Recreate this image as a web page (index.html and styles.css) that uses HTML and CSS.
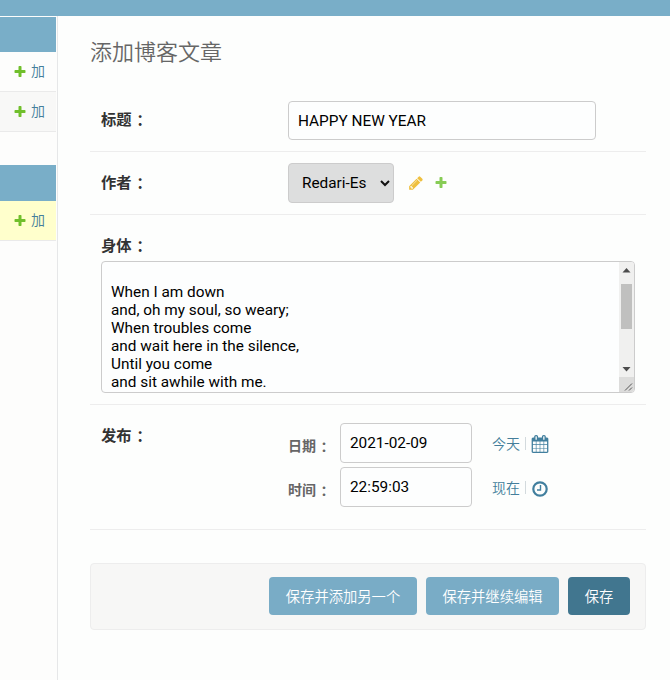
FILE: index.html
```
<!DOCTYPE html>
<html lang="zh">
<head>
<meta charset="utf-8">
<title>添加博客文章</title>
<link rel="stylesheet" href="styles.css">
</head>
<body>
<svg width="0" height="0" class="defs">
  <symbol id="plus" viewBox="0 0 1792 1792"><path d="M1600 736v192q0 40-28 68t-68 28h-416v416q0 40-28 68t-68 28h-192q-40 0-68-28t-28-68v-416h-416q-40 0-68-28t-28-68v-192q0-40 28-68t68-28h416v-416q0-40 28-68t68-28h192q40 0 68 28t28 68v416h416q40 0 68 28t28 68z"/></symbol>
</svg>
<header class="topbar"></header>
<div class="layout">
  <nav class="sidebar">
    <section class="module">
      <div class="caption"></div>
      <a class="row"><svg class="plus"><use href="#plus"/></svg>加</a>
      <a class="row alt"><svg class="plus"><use href="#plus"/></svg>加</a>
    </section>
    <section class="module">
      <div class="caption tall"></div>
      <a class="row current"><svg class="plus"><use href="#plus"/></svg>加</a>
    </section>
  </nav>
  <main class="content">
    <h1>添加博客文章</h1>
    <form>
      <div class="field title-field">
        <label>标题<span lang="zh-TW">：</span></label>
        <input class="title-input" type="text" value="HAPPY NEW YEAR">
      </div>
      <div class="field author-field">
        <label>作者<span lang="zh-TW">：</span></label>
        <div class="select">Redari-Es
          <svg width="10" height="7" viewBox="0 0 10 7"><path d="M1 1l4 4 4-4" fill="none" stroke="#111" stroke-width="2"/></svg>
        </div>
        <svg class="pencil" viewBox="0 0 1792 1792"><path d="M491 1536l91-91-235-235-91 91v107h128v128h107zm523-928q0-22-22-22-10 0-17 7l-542 542q-7 7-7 17 0 22 22 22 10 0 17-7l542-542q7-7 7-17zm-54-192l416 416-832 832h-416v-416zm683 96q0 53-37 90l-166 166-416-416 166-165q36-38 90-38 53 0 91 38l235 234q37 39 37 91z"/></svg>
        <svg class="plus add"><use href="#plus"/></svg>
      </div>
      <div class="field body-field">
        <label>身体<span lang="zh-TW">：</span></label>
        <div class="textarea">
          <div class="text">When I am down
and, oh my soul, so weary;
When troubles come
and wait here in the silence,
Until you come
and sit awhile with me.</div>
          <div class="scrollbar">
            <svg class="arrow" viewBox="0 0 15 16"><path d="M3.500 10.500h8l-4-4.500z"/></svg>
            <div class="track"><div class="thumb"></div></div>
            <svg class="arrow" viewBox="0 0 15 16"><path d="M3.500 6h8l-4 4.500z"/></svg>
            <svg class="grip" viewBox="0 0 15 15"><path d="M6 13.500l7-7M10 13.500l3-3" fill="none" stroke="#555"/></svg>
          </div>
        </div>
      </div>
      <div class="field publish-field">
        <label>发布<span lang="zh-TW">：</span></label>
        <div class="datetime">
          <div class="line"><span class="sub">日期<span lang="zh-TW">：</span></span><input type="text" value="2021-02-09"><a>今天</a><i></i>
            <svg class="icon calendar" viewBox="0 -128 1664 1792"><path d="M128 1536h288v-288h-288v288zm352 0h320v-288h-320v288zm-352-352h288v-320h-288v320zm352 0h320v-320h-320v320zm-352-384h288v-288h-288v288zm736 736h320v-288h-320v288zm-384-736h320v-288h-320v288zm768 736h288v-288h-288v288zm-384-352h320v-320h-320v320zm-352-864v-288q0-13-9.500-22.500t-22.500-9.500h-64q-13 0-22.500 9.500t-9.500 22.500v288q0 13 9.500 22.500t22.500 9.500h64q13 0 22.500-9.500t9.500-22.500zm736 864h288v-320h-288v320zm-384-384h320v-288h-320v288zm384 0h288v-288h-288v288zm32-480v-288q0-13-9.500-22.500t-22.500-9.500h-64q-13 0-22.500 9.500t-9.500 22.500v288q0 13 9.500 22.500t22.500 9.500h64q13 0 22.500-9.500t9.500-22.500zm384-64v1280q0 52-38 90t-90 38h-1408q-52 0-90-38t-38-90v-1280q0-52 38-90t90-38h128v-96q0-66 47-113t113-47h64q66 0 113 47t47 113v96h384v-96q0-66 47-113t113-47h64q66 0 113 47t47 113v96h128q52 0 90 38t38 90z"/></svg>
          </div>
          <div class="line"><span class="sub">时间<span lang="zh-TW">：</span></span><input type="text" value="22:59:03"><a>现在</a><i></i>
            <svg class="icon" viewBox="0 0 18 18"><circle cx="9" cy="9" r="6.700" fill="none" stroke="#417f9e" stroke-width="2.200"/><path d="M9.500 5v5H6" fill="none" stroke="#417f9e" stroke-width="1.400"/></svg>
          </div>
        </div>
      </div>
      <div class="submit-row">
        <button type="button">保存并添加另一个</button>
        <button type="button">保存并继续编辑</button>
        <button type="button" class="primary">保存</button>
      </div>
    </form>
  </main>
</div>
</body>
</html>
```
FILE: styles.css
```
* { box-sizing: border-box; }
body {
  margin: 0;
  height: 680px;
  overflow: hidden;
  background: #fdfefd;
  color: #333;
  font: 14px/18px Roboto, "Noto Sans CJK SC", sans-serif;
}
[lang="zh-TW"] { font-family: "Noto Sans CJK TC", sans-serif; line-height: 1; margin-left: 1px; vertical-align: -1px; }
.defs { position: absolute; }
.topbar { height: 16px; background: #79aec8; }
.layout { display: flex; height: 664px; }
.sidebar { width: 58px; padding: 1px 1px 0 0; border-right: 1px solid #e6e7e8; background: #fdfdfc; }
.module { margin-bottom: 33px; }
.caption { height: 35px; background: #79aec8; }
.caption.tall { height: 36px; }
.row {
  display: flex;
  align-items: center;
  height: 40px;
  padding: 0 0 1px 13px;
  gap: 4px;
  border-bottom: 1px solid #eaeaea;
  color: #447e9b;
  font-weight: 350;
}
.row.alt { background: #f8f8f7; }
.row.current { background: #ffffcc; }
.plus { width: 14px; height: 14px; fill: #70bf2b; }
.row .plus { margin-top: 1px; }
.content { flex: 1; padding: 22px 24px 0 32px; }
h1 { margin: 0 0 36px; font-size: 22px; line-height: 30px; font-weight: 350; color: #666; }
.field { display: flex; padding-left: 11px; border-bottom: 1px solid #ededed; }
label { width: 187px; font-size: 15.3px; font-weight: 700; flex: none; }
input {
  height: 40px;
  padding: 0 9px;
  border: 1px solid #ccc;
  border-radius: 4px;
  background: #fdfefe;
  color: #000;
  font: 15.35px Roboto, sans-serif;
}
.title-field { height: 48px; }
.title-field label { padding-top: 7px; }
.title-input { width: 308px; height: 39px; margin-top: -3px; }
.author-field { height: 63px; align-items: center; }
.select {
  display: flex;
  align-items: center;
  justify-content: space-between;
  width: 106px;
  height: 40px;
  padding: 0 3px 0 13px;
  border: 1px solid #ccc;
  border-radius: 4px;
  background: #dddede;
  color: #000;
  font-size: 15.35px;
}
.pencil { width: 16px; height: 16px; margin-left: 14px; fill: #efc03f; }
.plus.add { margin-left: 10px; fill: #87cc55; }
.body-field { display: block; height: 190px; padding-top: 22px; }
.body-field label { display: block; height: 24px; }
.textarea {
  display: flex;
  width: 534px;
  height: 132px;
  border: 1px solid #ccc;
  border-radius: 4px;
  overflow: hidden;
  background: #fdfefe;
}
.text { flex: 1; padding: 21px 9px 0; white-space: pre; font-size: 15.35px; color: #000; }
.scrollbar { display: flex; flex-direction: column; width: 15px; background: #f0f0ef; }
.arrow { width: 15px; height: 16px; fill: #4c4c4c; }
.track { flex: 1; padding: 6px 2px 0; }
.thumb { height: 45px; background: #c0c0bf; }
.grip { width: 15px; height: 15px; background: #dcdcdb; }
.publish-field { height: 125px; padding-top: 18px; }
.publish-field > label { padding-top: 4px; }
.datetime { display: flex; flex-direction: column; gap: 4px; }
.line { display: flex; align-items: center; height: 40px; color: #447e9b; font-weight: 350; }
.sub { width: 52px; padding-top: 5px; color: #666; font-weight: 700; }
.line input { width: 132px; margin-right: 20px; }
.line a { padding-top: 2px; }
.line i { width: 1px; height: 13px; margin: 0 5px 0 5px; background: #d3dadd; }
.icon { width: 18px; height: 18px; margin-top: 3px; fill: #417f9e; }
.icon.calendar { margin-top: 1px; }
.submit-row {
  display: flex;
  justify-content: flex-end;
  gap: 9px;
  height: 67px;
  margin-top: 33px;
  padding: 13px 15px;
  border: 1px solid #ededed;
  border-radius: 4px;
  background: #f7f7f6;
}
button {
  height: 38px;
  padding: 0 0 2px;
  width: 148px;
  border: 0;
  border-radius: 4px;
  background: #79acc6;
  color: #fff;
  font: 350 14.3px "Noto Sans CJK SC", sans-serif;
}
button:nth-child(2) { width: 133px; }
button.primary { width: 62px; background: #41768f; }
```
